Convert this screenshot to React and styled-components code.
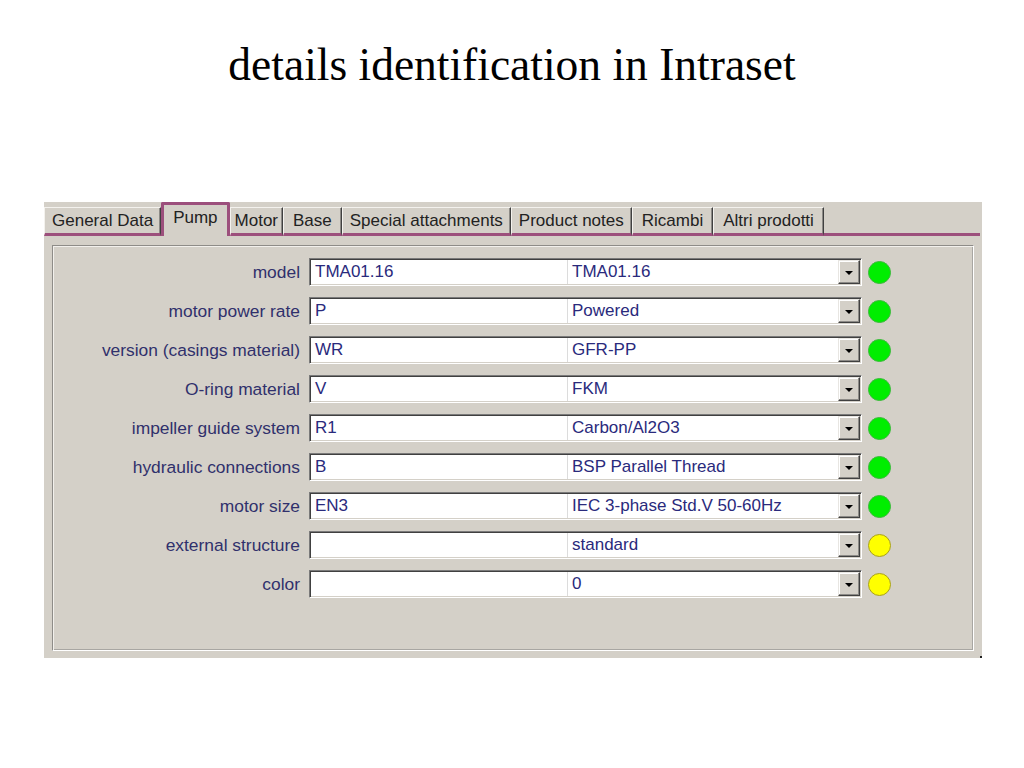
import React from "react";
import styled, { createGlobalStyle } from "styled-components";

const Global = createGlobalStyle`
  html, body { margin: 0; padding: 0; background: #ffffff; }
  body { width: 1024px; height: 768px; overflow: hidden; }
`;

const Page = styled.div`
  width: 1024px;
  height: 768px;
  background: #fff;
  position: relative;
`;

const Title = styled.h1`
  margin: 0;
  padding-top: 43px;
  height: 44px;
  line-height: 44px;
  text-align: center;
  font-family: "Liberation Serif", "Times New Roman", serif;
  font-weight: normal;
  font-size: 45.5px;
  color: #000;
`;

const Window = styled.div`
  margin: 115px 0 0 44px;
  width: 938px;
  height: 456px;
  background: #d4d0c8;
  display: flex;
  flex-direction: column;
  font-family: "Liberation Sans", Arial, sans-serif;
`;

const TabBar = styled.div`
  display: flex;
  align-items: flex-end;
  height: 34px;
  flex: none;
`;

const purple = "#9c4f7c";

const Tab = styled.div`
  box-sizing: border-box;
  height: 29px;
  padding: 3px ${(p) => p.$pad || 7}px 0 ${(p) => p.$pad || 7}px;
  font-size: 17px;
  line-height: 20px;
  color: #222;
  white-space: nowrap;
  border-left: 1px solid #f4f2ee;
  border-top: 1px solid #f4f2ee;
  border-right: 1px solid #404040;
  box-shadow: inset -1px 0 0 #8c8a86;
  border-bottom: 3px solid ${purple};
`;

const ActiveTab = styled.div`
  box-sizing: border-box;
  height: 34px;
  padding: 3px 9px 0 9px;
  font-size: 17px;
  line-height: 20px;
  color: #222;
  white-space: nowrap;
  border: 3px solid ${purple};
  border-bottom: none;
  border-radius: 2px 2px 0 0;
`;

const TabFill = styled.div`
  flex: 1;
  height: 3px;
  background: ${purple};
  margin-right: 2px;
`;

const Content = styled.div`
  flex: 1;
  padding: 9px 8px 7px 8px;
  display: flex;
`;

const Inner = styled.div`
  flex: 1;
  box-sizing: border-box;
  border: 1px solid;
  border-color: #8e8c88 #ffffff #ffffff #8e8c88;
  box-shadow: inset 1px 1px 0 #f2f0ec, inset -1px -1px 0 #a8a6a2;
  padding: 12px 0 0 1px;
  display: flex;
  flex-direction: column;
  gap: 11px;
`;

const Row = styled.div`
  display: flex;
  align-items: center;
  height: 28px;
`;

const Label = styled.div`
  width: 246px;
  margin-right: 9px;
  text-align: right;
  font-size: 17.4px;
  color: #30306c;
  white-space: nowrap;
`;

const Combo = styled.div`
  box-sizing: border-box;
  width: 553px;
  height: 28px;
  display: flex;
  background: #fff;
  border: 1px solid;
  border-color: #7a7a7a #ffffff #ffffff #7a7a7a;
  box-shadow: inset 1px 1px 0 #404040, inset -1px -1px 0 #d4d0c8;
  padding: 1px;
`;

const Cell = styled.div`
  box-sizing: border-box;
  width: ${(p) => (p.$grow ? "auto" : "257px")};
  flex: ${(p) => (p.$grow ? 1 : "none")};
  padding-left: 4px;
  font-size: 17px;
  line-height: 24px;
  color: #2a2a7c;
  white-space: nowrap;
  overflow: hidden;
  border-right: ${(p) => (p.$grow ? "none" : "1px solid #dcdcdc")};
`;

const DropButton = styled.div`
  box-sizing: border-box;
  width: 22px;
  height: 24px;
  background: #d4d0c8;
  border: 1px solid;
  border-color: #e8e6e2 #404040 #404040 #e8e6e2;
  box-shadow: inset -1px -1px 0 #8c8a86, inset 1px 1px 0 #ffffff;
  display: flex;
  align-items: center;
  justify-content: center;
`;

const Arrow = styled.div`
  width: 0;
  height: 0;
  border-left: 4px solid transparent;
  border-right: 4px solid transparent;
  border-top: 4px solid #000;
  margin-top: 1px;
`;

const Status = styled.div`
  box-sizing: border-box;
  margin-left: 6px;
  width: 23px;
  height: 23px;
  border-radius: 50%;
  background: ${(p) => (p.$ok ? "#00ee00" : "#ffff00")};
  border: 1px solid ${(p) => (p.$ok ? "#3cb83c" : "#a8a020")};
`;

const CornerDot = styled.div`
  position: absolute;
  left: 980px;
  top: 656px;
  width: 2px;
  height: 2px;
  background: #222;
`;

const tabs = [
  ["General Data", 7],
  ["Pump", 0],
  ["Motor", 4],
  ["Base", 9],
  ["Special attachments", 7],
  ["Product notes", 7],
  ["Ricambi", 9],
  ["Altri prodotti", 9],
];

const rows = [
  ["model", "TMA01.16", "TMA01.16", true],
  ["motor power rate", "P", "Powered", true],
  ["version (casings material)", "WR", "GFR-PP", true],
  ["O-ring material", "V", "FKM", true],
  ["impeller guide system", "R1", "Carbon/Al2O3", true],
  ["hydraulic connections", "B", "BSP Parallel Thread", true],
  ["motor size", "EN3", "IEC 3-phase Std.V 50-60Hz", true],
  ["external structure", "", "standard", false],
  ["color", "", "0", false],
];

export default function App() {
  return (
    <Page>
      <Global />
      <Title>details identification in Intraset</Title>
      <Window>
        <TabBar>
          {tabs.map(([t, pad]) =>
            t === "Pump" ? (
              <ActiveTab key={t}>{t}</ActiveTab>
            ) : (
              <Tab key={t} $pad={pad}>
                {t}
              </Tab>
            )
          )}
          <TabFill />
        </TabBar>
        <Content>
          <Inner>
            {rows.map(([label, code, desc, ok]) => (
              <Row key={label}>
                <Label>{label}</Label>
                <Combo>
                  <Cell>{code}</Cell>
                  <Cell $grow>{desc}</Cell>
                  <DropButton>
                    <Arrow />
                  </DropButton>
                </Combo>
                <Status $ok={ok} />
              </Row>
            ))}
          </Inner>
        </Content>
      </Window>
      <CornerDot />
    </Page>
  );
}
